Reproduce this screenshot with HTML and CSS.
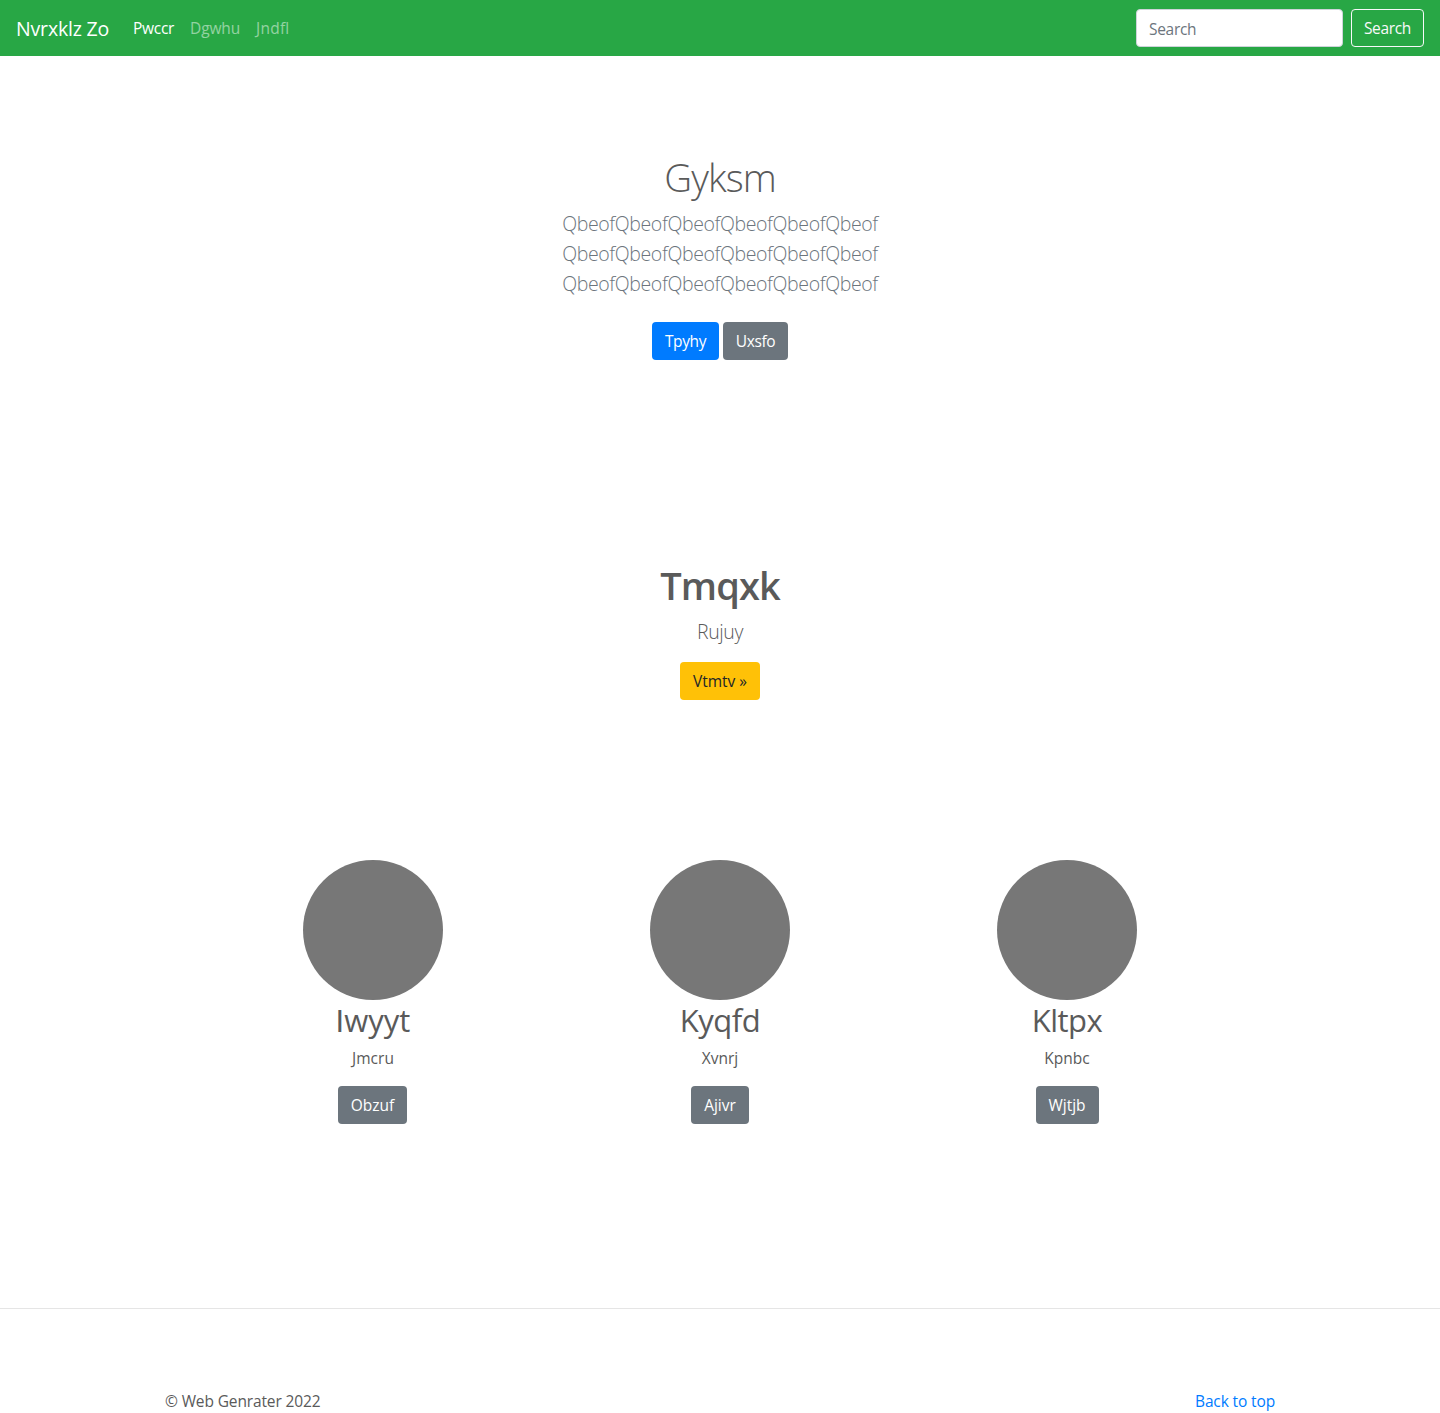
FILE: index.html
```html
<!DOCTYPE html>
<html lang="en">
<head>
<meta charset="utf-8">
<title>Nvrxklz Zo</title>
<link rel="stylesheet" href="styles.css">
</head>
<body>
<header class="navbar">
  <a class="brand" href="#">Nvrxklz Zo</a>
  <nav class="nav">
    <a class="nav-link nav-home active" href="#">Pwccr</a>
    <a class="nav-link nav-second" href="#">Dgwhu</a>
    <a class="nav-link nav-third" href="#">Jndfl</a>
  </nav>
  <form class="search">
    <input class="search-input" type="text" placeholder="Search" aria-label="Search">
    <button class="btn btn-outline" type="button">Search</button>
  </form>
</header>
<main>
  <section class="hero">
    <h1 class="hero-title">Gyksm</h1>
    <p class="lead muted">QbeofQbeofQbeofQbeofQbeofQbeof<br>QbeofQbeofQbeofQbeofQbeofQbeof<br>QbeofQbeofQbeofQbeofQbeofQbeof</p>
    <div class="actions">
      <a class="btn btn-primary" href="#">Tpyhy</a>
      <a class="btn btn-secondary btn-uxsfo" href="#">Uxsfo</a>
    </div>
  </section>
  <section class="promo">
    <h1 class="promo-title">Tmqxk</h1>
    <p class="lead">Rujuy</p>
    <a class="btn btn-warning" href="#">Vtmtv »</a>
  </section>
  <section class="features">
    <article class="feature">
      <div class="avatar"></div>
      <h2 class="feature-title title-first"><span class="plain-cap">I</span>wyyt</h2>
      <p class="feature-text">Jmcru</p>
      <a class="btn btn-secondary btn-obzuf" href="#">Obzuf</a>
    </article>
    <article class="feature">
      <div class="avatar"></div>
      <h2 class="feature-title">Kyqfd</h2>
      <p class="feature-text">Xvnrj</p>
      <a class="btn btn-secondary btn-ajivr" href="#">Ajivr</a>
    </article>
    <article class="feature">
      <div class="avatar"></div>
      <h2 class="feature-title">Kltpx</h2>
      <p class="feature-text">Kpnbc</p>
      <a class="btn btn-secondary btn-wjtjb" href="#">Wjtjb</a>
    </article>
  </section>
</main>
<footer class="footer">
  <div class="footer-inner">
    <span class="copyright">© Web Genrater 2022</span>
    <a class="top-link" href="#">Back to top</a>
  </div>
</footer>
</body>
</html>
```

FILE: styles.css
```css
* { box-sizing: border-box; }
body {
  margin: 0;
  background: #fff;
  color: #5a5a5a;
  font-family: "Open Sans", "Noto Sans", sans-serif;
  font-size: 15.5px;
  line-height: 24px;
}
a { color: #007bff; text-decoration: none; white-space: nowrap; }
h1, h2, p { margin: 0; }

.navbar { display: flex; align-items: center; height: 56px; padding: 0 16px; background: #28a745; }
.brand { width: 93px; margin-right: 16px; padding-top: 1px; color: #fff; font-size: 19.5px; line-height: 30px; letter-spacing: -0.17px; }
.nav { display: flex; flex: 1; }
.nav-link { padding: 8px; color: rgba(255, 255, 255, 0.5); }
.nav-link.active { color: #fff; }
.nav-home { width: 57px; letter-spacing: -0.28px; }
.nav-second { width: 66px; letter-spacing: -0.1px; }
.nav-third { letter-spacing: 0.25px; }
.search { display: flex; gap: 8px; }
.search-input {
  width: 207px;
  height: 38px;
  padding: 7px 12px 5px;
  border: 1px solid #ced4da;
  border-radius: 4px;
  font: inherit;
  letter-spacing: -0.3px;
}
.search-input::placeholder { color: #6c757d; opacity: 1; }

.btn {
  display: inline-flex;
  align-items: center;
  justify-content: center;
  height: 38px;
  border: 1px solid transparent;
  border-radius: 4px;
  color: #fff;
  font: inherit;
}
.btn-outline { width: 73px; border-color: #f8f9fa; background: transparent; color: #f8f9fa; letter-spacing: -0.33px; }
.btn-primary { width: 67px; background: #007bff; letter-spacing: -0.4px; }
.btn-secondary { background: #6c757d; }
.btn-warning { width: 80px; background: #ffc107; color: #212529; }
.btn-uxsfo { width: 65px; letter-spacing: -0.4px; }
.btn-obzuf { width: 69px; margin-right: 1px; }
.btn-ajivr { width: 58px; }
.btn-wjtjb { width: 63px; }

.hero { display: flex; flex-direction: column; align-items: center; padding-top: 97px; }
.hero-title { margin-bottom: 8px; font-size: 38.5px; font-weight: 300; line-height: 48px; letter-spacing: -0.9px; }
.lead { font-size: 19.5px; font-weight: 300; line-height: 30px; text-align: center; letter-spacing: -0.38px; }
.muted { color: #6c757d; }
.actions { display: flex; gap: 4px; margin-top: 23px; }

.promo { display: flex; flex-direction: column; align-items: center; padding-top: 201px; }
.promo-title { margin-bottom: 8px; font-size: 38px; font-weight: 600; line-height: 48px; letter-spacing: -0.9px; }
.promo .btn { margin-top: 15px; }

.features { display: grid; grid-template-columns: repeat(3, 347px); justify-content: center; padding-top: 160px; }
.feature { display: flex; flex-direction: column; align-items: center; }
.avatar { width: 140px; height: 140px; border-radius: 50%; background: #777; }
.feature-title { margin: 1px 0 7px; font-size: 31px; font-weight: 400; line-height: 38px; letter-spacing: -0.5px; }
.title-first { letter-spacing: 0; }
.plain-cap { font-family: "Liberation Sans", sans-serif; line-height: 1; }
.feature-text { margin-bottom: 16px; }

.footer { margin-top: 184px; border-top: 1px solid #e5e5e5; }
.footer-inner { display: flex; justify-content: space-between; width: 1110px; margin: 0 auto; padding-top: 80px; }
.copyright { letter-spacing: -0.13px; }
.top-link { letter-spacing: -0.13px; }
```
